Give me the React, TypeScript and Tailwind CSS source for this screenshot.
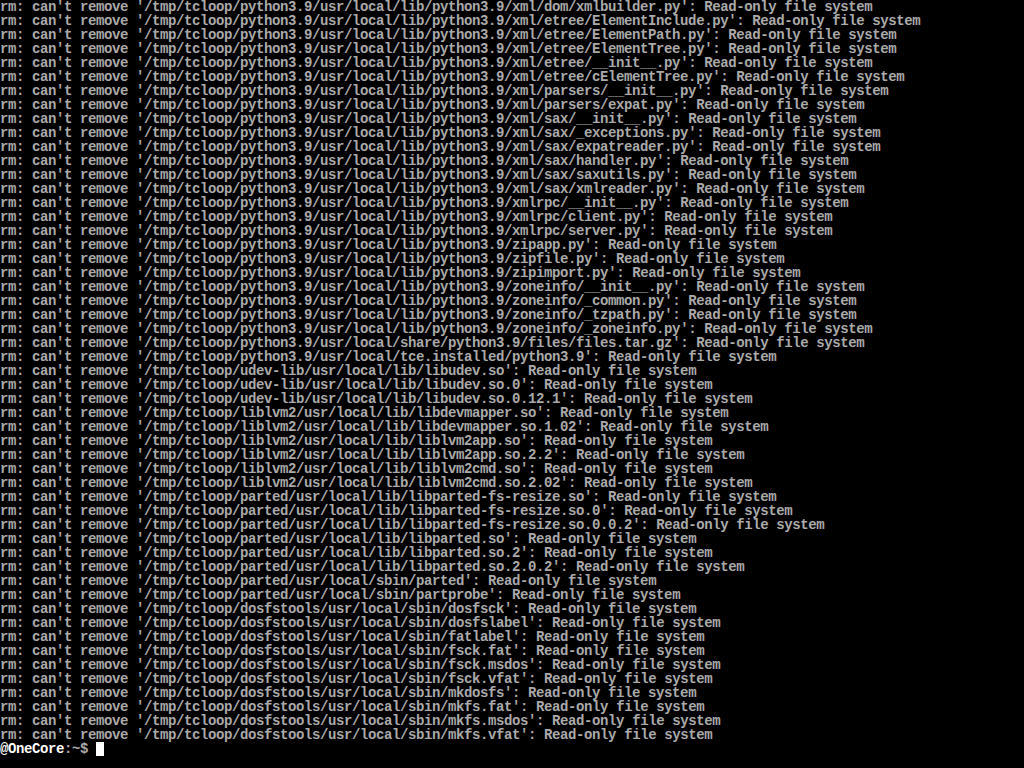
const py = "/tmp/tcloop/python3.9/usr/local/lib/python3.9/";
const lvm = "/tmp/tcloop/liblvm2/usr/local/lib/";
const parted = "/tmp/tcloop/parted/usr/local/";
const dosfs = "/tmp/tcloop/dosfstools/usr/local/sbin/";

const paths = [
  py + "xml/dom/xmlbuilder.py",
  py + "xml/etree/ElementInclude.py",
  py + "xml/etree/ElementPath.py",
  py + "xml/etree/ElementTree.py",
  py + "xml/etree/__init__.py",
  py + "xml/etree/cElementTree.py",
  py + "xml/parsers/__init__.py",
  py + "xml/parsers/expat.py",
  py + "xml/sax/__init__.py",
  py + "xml/sax/_exceptions.py",
  py + "xml/sax/expatreader.py",
  py + "xml/sax/handler.py",
  py + "xml/sax/saxutils.py",
  py + "xml/sax/xmlreader.py",
  py + "xmlrpc/__init__.py",
  py + "xmlrpc/client.py",
  py + "xmlrpc/server.py",
  py + "zipapp.py",
  py + "zipfile.py",
  py + "zipimport.py",
  py + "zoneinfo/__init__.py",
  py + "zoneinfo/_common.py",
  py + "zoneinfo/_tzpath.py",
  py + "zoneinfo/_zoneinfo.py",
  "/tmp/tcloop/python3.9/usr/local/share/python3.9/files/files.tar.gz",
  "/tmp/tcloop/python3.9/usr/local/tce.installed/python3.9",
  "/tmp/tcloop/udev-lib/usr/local/lib/libudev.so",
  "/tmp/tcloop/udev-lib/usr/local/lib/libudev.so.0",
  "/tmp/tcloop/udev-lib/usr/local/lib/libudev.so.0.12.1",
  lvm + "libdevmapper.so",
  lvm + "libdevmapper.so.1.02",
  lvm + "liblvm2app.so",
  lvm + "liblvm2app.so.2.2",
  lvm + "liblvm2cmd.so",
  lvm + "liblvm2cmd.so.2.02",
  parted + "lib/libparted-fs-resize.so",
  parted + "lib/libparted-fs-resize.so.0",
  parted + "lib/libparted-fs-resize.so.0.0.2",
  parted + "lib/libparted.so",
  parted + "lib/libparted.so.2",
  parted + "lib/libparted.so.2.0.2",
  parted + "sbin/parted",
  parted + "sbin/partprobe",
  dosfs + "dosfsck",
  dosfs + "dosfslabel",
  dosfs + "fatlabel",
  dosfs + "fsck.fat",
  dosfs + "fsck.msdos",
  dosfs + "fsck.vfat",
  dosfs + "mkdosfs",
  dosfs + "mkfs.fat",
  dosfs + "mkfs.msdos",
  dosfs + "mkfs.vfat",
];

export default function App() {
  return (
    <div className="w-[1024px] h-[768px] bg-black overflow-hidden font-['Liberation_Mono','DejaVu_Sans_Mono',monospace] font-bold text-[14px] leading-[14px] tracking-[-0.4px] text-[#aaaaaa]">
      {paths.map((p) => (
        <div key={p} className="h-[14px] whitespace-pre">
          rm: can't remove '{p}': Read-only file system
        </div>
      ))}
      <div className="h-[14px] whitespace-pre flex items-center">
        <span className="text-white">@OneCore</span>
        <span>:~$ </span>
        <span className="inline-block w-[8px] h-[14px] bg-white" />
      </div>
    </div>
  );
}
